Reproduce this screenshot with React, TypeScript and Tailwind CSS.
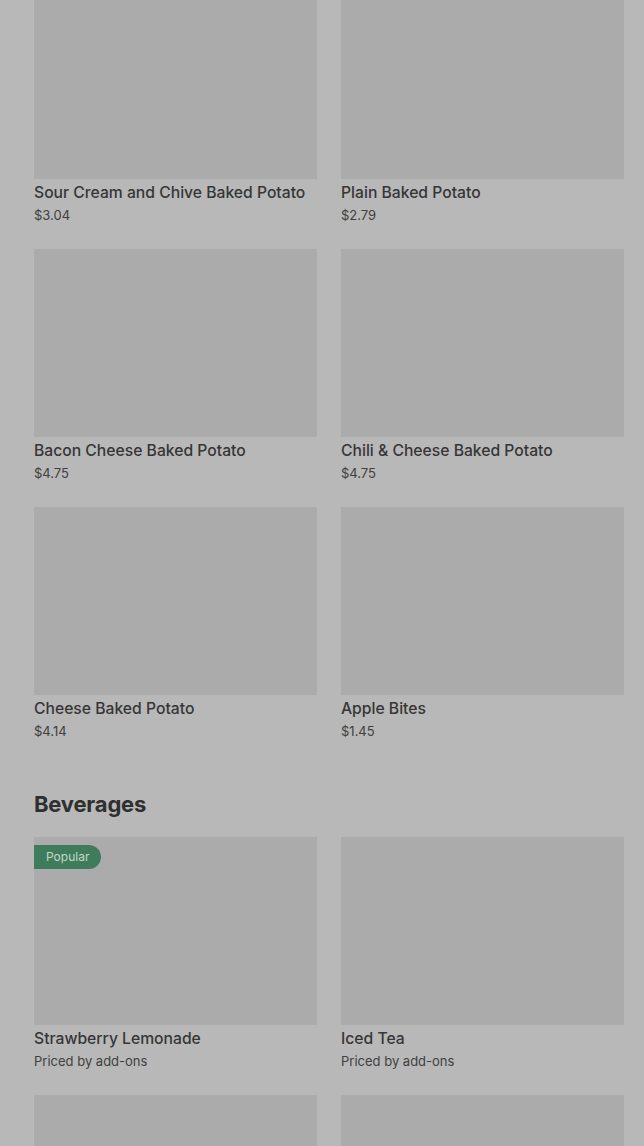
const potatoes = [
  { name: "Sour Cream and Chive Baked Potato", price: "$3.04" },
  { name: "Plain Baked Potato", price: "$2.79" },
  { name: "Bacon Cheese Baked Potato", price: "$4.75" },
  { name: "Chili & Cheese Baked Potato", price: "$4.75" },
  { name: "Cheese Baked Potato", price: "$4.14" },
  { name: "Apple Bites", price: "$1.45" },
];

const beverages = [
  { name: "Strawberry Lemonade", price: "Priced by add-ons", popular: true },
  { name: "Iced Tea", price: "Priced by add-ons" },
  { name: "", price: "" },
  { name: "", price: "" },
];

type Item = { name: string; price: string; popular?: boolean };

const ItemCard = ({ item }: { item: Item }) => (
  <div className="flex flex-col">
    <div className="relative h-[188px] bg-[#ababab]">
      {item.popular && (
        <span className="absolute left-0 top-2 flex h-6 items-center rounded-r-full bg-[#3f7c5b] pl-3 pr-3 text-[12px] text-[#c5d6cb]">
          Popular
        </span>
      )}
    </div>
    <div className="h-[46px] pt-1">
      <p className="truncate text-[15.7px] font-medium leading-5 text-[#363636]">{item.name}</p>
      <p className="mt-[2px] text-[13px] leading-5 text-[#404040]">{item.price}</p>
    </div>
  </div>
);

export default function App() {
  return (
    <div className="h-[1146px] overflow-hidden bg-[#b8b8b8] font-['Inter',sans-serif]">
      <div className="mt-[-9px] pl-[34px] pr-5">
        <section className="grid grid-cols-2 gap-x-6 gap-y-6">
          {potatoes.map((item) => (
            <ItemCard key={item.name} item={item} />
          ))}
        </section>
        <h2 className="mb-[19px] mt-[49px] text-[22px] font-bold leading-7 tracking-[-0.2px] text-[#2f2f2f]">
          Beverages
        </h2>
        <section className="grid grid-cols-2 gap-x-6 gap-y-6">
          {beverages.map((item, i) => (
            <ItemCard key={i} item={item} />
          ))}
        </section>
      </div>
    </div>
  );
}
